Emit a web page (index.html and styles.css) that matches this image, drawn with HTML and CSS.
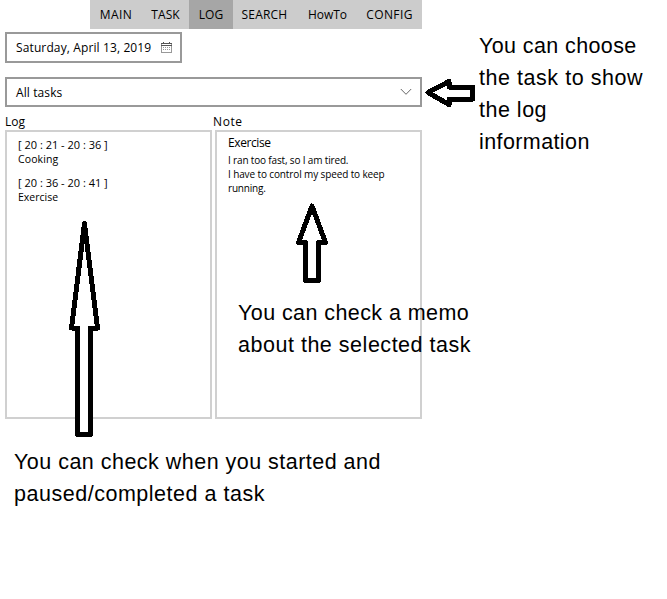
FILE: index.html
```html
<!DOCTYPE html>
<html lang="en">
<head>
<meta charset="utf-8">
<title>Task log</title>
<link rel="stylesheet" href="styles.css">
</head>
<body>
<main class="app">
  <nav class="tabs">
    <a class="tab main">MAIN</a><a class="tab task">TASK</a><a class="tab log active">LOG</a><a class="tab search">SEARCH</a><a class="tab howto">HowTo</a><a class="tab config">CONFIG</a>
  </nav>
  <div class="field date">
    <span class="date-text">Saturday, April 13, 2019</span>
    <svg class="calendar" width="11" height="11" viewBox="0 0 11 11" shape-rendering="crispEdges">
      <path d="M.5 1v9.500M10.500 1v9.500M0 10.500h11" fill="none" stroke="#999"/>
      <path d="M0 1.500h11M0 3.500h11M2.500 0v2M8.500 0v2" fill="none" stroke="#555"/>
      <path d="M2 5.500h7M2 7.500h7" stroke="#999" stroke-dasharray="1 1"/>
    </svg>
  </div>
  <div class="field select">
    <span class="select-text">All tasks</span>
    <svg class="chevron" width="12" height="8" viewBox="0 0 12 8"><path d="M.8 1 6 6.3 11.2 1" fill="none" stroke="#666"/></svg>
  </div>
  <div class="columns">
    <section class="column">
      <h2 class="label">Log</h2>
      <div class="panel log-panel">
        <div class="entry"><div class="time">[ 20 : 21 - 20 : 36 ]</div><div class="name cooking">Cooking</div></div>
        <div class="entry"><div class="time">[ 20 : 36 - 20 : 41 ]</div><div class="name">Exercise</div></div>
      </div>
    </section>
    <section class="column">
      <h2 class="label note-label">Note</h2>
      <div class="panel note-panel">
        <div class="note-title">Exercise</div>
        <p class="note"><span class="line-one">I ran too fast, so I am tired.</span><br><span class="line-two">I have to control my speed to keep</span><br><span class="line-three">running.</span></p>
      </div>
    </section>
  </div>
</main>
<svg class="arrows" width="667" height="599" viewBox="0 0 667 599" shape-rendering="crispEdges">
  <path d="M428 92.500 449 81.500V87H472.500V99H449V104.500Z"/>
  <path d="M312 206 325.500 242.500H318.500V280.500H305.500V242.500H298.500Z"/>
  <path d="M84.500 223.500 97.500 328H90.500V434.500H77.500V328H71.500Z"/>
</svg>
<p class="callout choose"><span class="c1">You can choose</span><br><span class="c2">the task to show</span><br><span class="c3">the log</span><br><span class="c4">information</span></p>
<p class="callout memo"><span class="m1">You can check a memo</span><br><span class="m2">about the selected task</span></p>
<p class="callout when"><span class="w1">You can check when you started and</span><br><span class="w2">paused/completed a task</span></p>
</body>
</html>
```
FILE: styles.css
```css
* { box-sizing: border-box; }
body {
  margin: 0;
  position: relative;
  height: 599px;
  overflow: hidden;
  background: #fff;
  color: #000;
  font-family: "Open Sans", "Noto Sans", sans-serif;
}
.app { width: 417px; margin-left: 5px; }
.tabs { display: flex; height: 29px; margin-left: 85px; background: #ccc; }
.tab { display: flex; align-items: center; justify-content: center; font-size: 12px; white-space: nowrap; }
.main { width: 52px; letter-spacing: .4px; }
.task { width: 47px; letter-spacing: .1px; }
.log { width: 44px; }
.search { width: 63px; letter-spacing: .2px; }
.howto { width: 63px; }
.config { width: 63px; padding-right: 2px; letter-spacing: .4px; }
.active { background: #a6a6a6; }
.field { display: flex; align-items: center; justify-content: space-between; border: 2px solid #999; font-size: 12px; white-space: nowrap; }
.date { width: 177px; height: 31px; margin-top: 3px; padding: 0 8px 0 9px; letter-spacing: .12px; }
.select { width: 417px; height: 30px; margin-top: 14px; padding: 0 8px 0 9px; letter-spacing: .1px; }
.columns { display: flex; gap: 3px; margin-top: 7px; }
.column { width: 207px; }
.label { height: 16px; margin: 0; font-size: 12px; line-height: 16px; font-weight: 400; }
.note-label { margin-left: -2px; letter-spacing: .6px; }
.panel { height: 289px; border: 2px solid #d0d0d0; }
.log-panel { padding: 5px 11px; }
.entry { height: 38px; }
.time { font-size: 11px; line-height: 15px; white-space: pre; }
.name { font-size: 10.5px; line-height: 15px; }
.cooking { letter-spacing: .1px; }
.note-panel { padding: 2px 11px; }
.note-title { font-size: 12px; line-height: 18px; letter-spacing: -.4px; }
.note { margin: 1px 0 0; font-size: 10px; line-height: 14px; white-space: nowrap; }
.line-one { letter-spacing: -.16px; }
.line-two { letter-spacing: -.12px; }
.line-three { letter-spacing: -.2px; }
.arrows { position: absolute; top: 0; left: 0; }
.arrows path { fill: #fff; stroke: #000; stroke-width: 5; stroke-linejoin: round; }
.callout { position: absolute; margin: 0; font-family: "Liberation Sans", sans-serif; font-size: 21.500px; line-height: 32px; white-space: nowrap; }
.choose { left: 479px; top: 30px; }
.memo { left: 238px; top: 297px; }
.when { left: 14px; top: 446px; }
.c1 { letter-spacing: .39px; }
.c2 { letter-spacing: .54px; }
.c3 { letter-spacing: .5px; }
.c4 { letter-spacing: .4px; }
.m1 { letter-spacing: .42px; }
.m2 { letter-spacing: .52px; }
.w1 { letter-spacing: .48px; }
.w2 { letter-spacing: .52px; }
```
